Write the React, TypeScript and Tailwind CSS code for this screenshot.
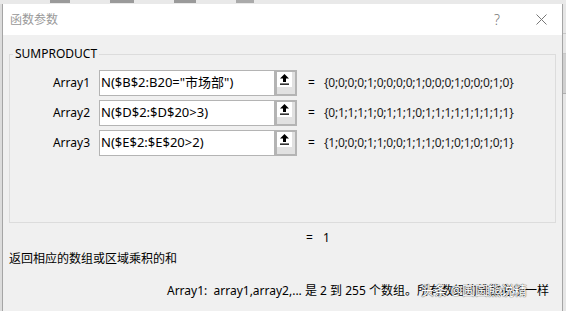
import React from "react";

const rows = [
  { label: "Array1", formula: 'N($B$2:B20="市场部")', value: "{0;0;0;0;1;0;0;0;0;1;0;0;0;1;0;0;0;1;0}" },
  { label: "Array2", formula: "N($D$2:$D$20>3)", value: "{0;1;1;1;1;0;1;1;1;0;1;1;1;1;1;1;1;1;1}" },
  { label: "Array3", formula: "N($E$2:$E$20>2)", value: "{1;0;0;0;1;1;0;0;1;1;1;0;1;0;1;0;1;0;1}" },
];

function UpArrow() {
  return (
    <svg width="9" height="11" viewBox="0 0 9 11">
      <path d="M4.5 0 L9 4.5 L6 4.5 L6 8 L3 8 L3 4.5 L0 4.5 Z" fill="#000" />
      <rect x="0" y="9.5" width="9" height="1.3" fill="#000" />
    </svg>
  );
}

function ArgRow({ label, formula, value }: { label: string; formula: string; value: string }) {
  return (
    <div className="flex h-[26px] items-center">
      <div className="w-[80px] text-right text-[12px] text-black">{label}</div>
      <div className="ml-[9px] flex h-[26px] w-[198px]">
        <div className="flex flex-1 items-center border border-[#b4b4b4] bg-white pl-[1px] text-[13px] text-black">
          {formula}
        </div>
        <div className="h-[26px] w-[22px] border-2 border-[#b4b4b4] bg-[#e1e1e1]">
          <div className="flex h-[15px] w-[15px] items-center justify-center bg-white">
            <UpArrow />
          </div>
        </div>
      </div>
      <span className="ml-[11px] text-[12px] text-black">=</span>
      <span className="ml-[9px] text-[12px] tracking-[-0.2px] text-[#1a1a1a]">{value}</span>
    </div>
  );
}

export default function App() {
  return (
    <div className="flex h-[311px] w-[566px] flex-col overflow-hidden bg-[#e4e4e4] font-['Noto_Sans','Noto_Sans_CJK_SC',sans-serif]">
      {/* excel behind */}
      <div className="flex h-[4px] shrink-0 gap-[40px] bg-[#e9e9e9] pl-[50px]">
        <div className="h-[3px] w-[20px] bg-[#9a9a9a]" />
        <div className="h-[3px] w-[24px] bg-[#9a9a9a]" />
        <div className="h-[3px] w-[22px] bg-[#9a9a9a]" />
        <div className="h-[3px] w-[18px] bg-[#aaaaaa]" />
      </div>
      <div className="flex flex-1">
        <div className="w-[2px] bg-[#dcdcdc]" />
        <div className="flex w-[561px] flex-col border-x border-[#a5a5a5] bg-[#f0f0f0]">
          {/* title bar */}
          <div className="flex h-[31px] shrink-0 items-center bg-white pl-[7px] pr-[15px]">
            <span className="text-[12px] text-[#999]">函数参数</span>
            <span className="ml-auto text-[14px] font-light text-[#777]">?</span>
            <svg className="ml-[36px]" width="11" height="11" viewBox="0 0 11 11">
              <path d="M0.5 0.5 L10.5 10.5 M10.5 0.5 L0.5 10.5" stroke="#777" strokeWidth="1" />
            </svg>
          </div>

          {/* body */}
          <div className="flex flex-1 flex-col px-[6px]">
            <fieldset className="mt-[11px] h-[177px] border border-[#dcdcdc] pl-0">
              <legend className="ml-[3px] px-[2px] text-[12px] leading-[16px] text-black">SUMPRODUCT</legend>
              <div className="mt-[8px] flex flex-col gap-[4px]">
                {rows.map((r) => (
                  <ArgRow key={r.label} {...r} />
                ))}
              </div>
            </fieldset>

            <div className="mt-[7px] flex h-[16px] items-center pl-[297px] text-[12px] text-black">
              <span>=</span>
              <span className="ml-[10px]">1</span>
            </div>
            <div className="mt-[5px] h-[16px] text-[12px] leading-[16px] text-black">返回相应的数组或区域乘积的和</div>

            <div className="relative mt-[16px] h-[16px] w-[546px] overflow-hidden whitespace-nowrap pl-[158px] text-[12px] leading-[16px] text-black">
              Array1:&nbsp; array1,array2,... 是 2 到 255 个数组。所有数组的维数必须一样
              <span className="absolute left-[412px] top-[-1px] text-[13px] text-white [text-shadow:0_0_1px_#444,0_0_1px_#444]">
                头条 @圆圆熊说精
              </span>
            </div>
          </div>
        </div>
        <div className="flex flex-1 flex-col bg-[#e6e6e6]">
          <div className="h-[30px] border-b border-[#c8c8c8]" />
          <div className="h-[20px] border-b border-[#c8c8c8]" />
          <div className="h-[40px] border-b border-[#b0b0b0] bg-[#d0d0d0]" />
        </div>
      </div>
    </div>
  );
}
